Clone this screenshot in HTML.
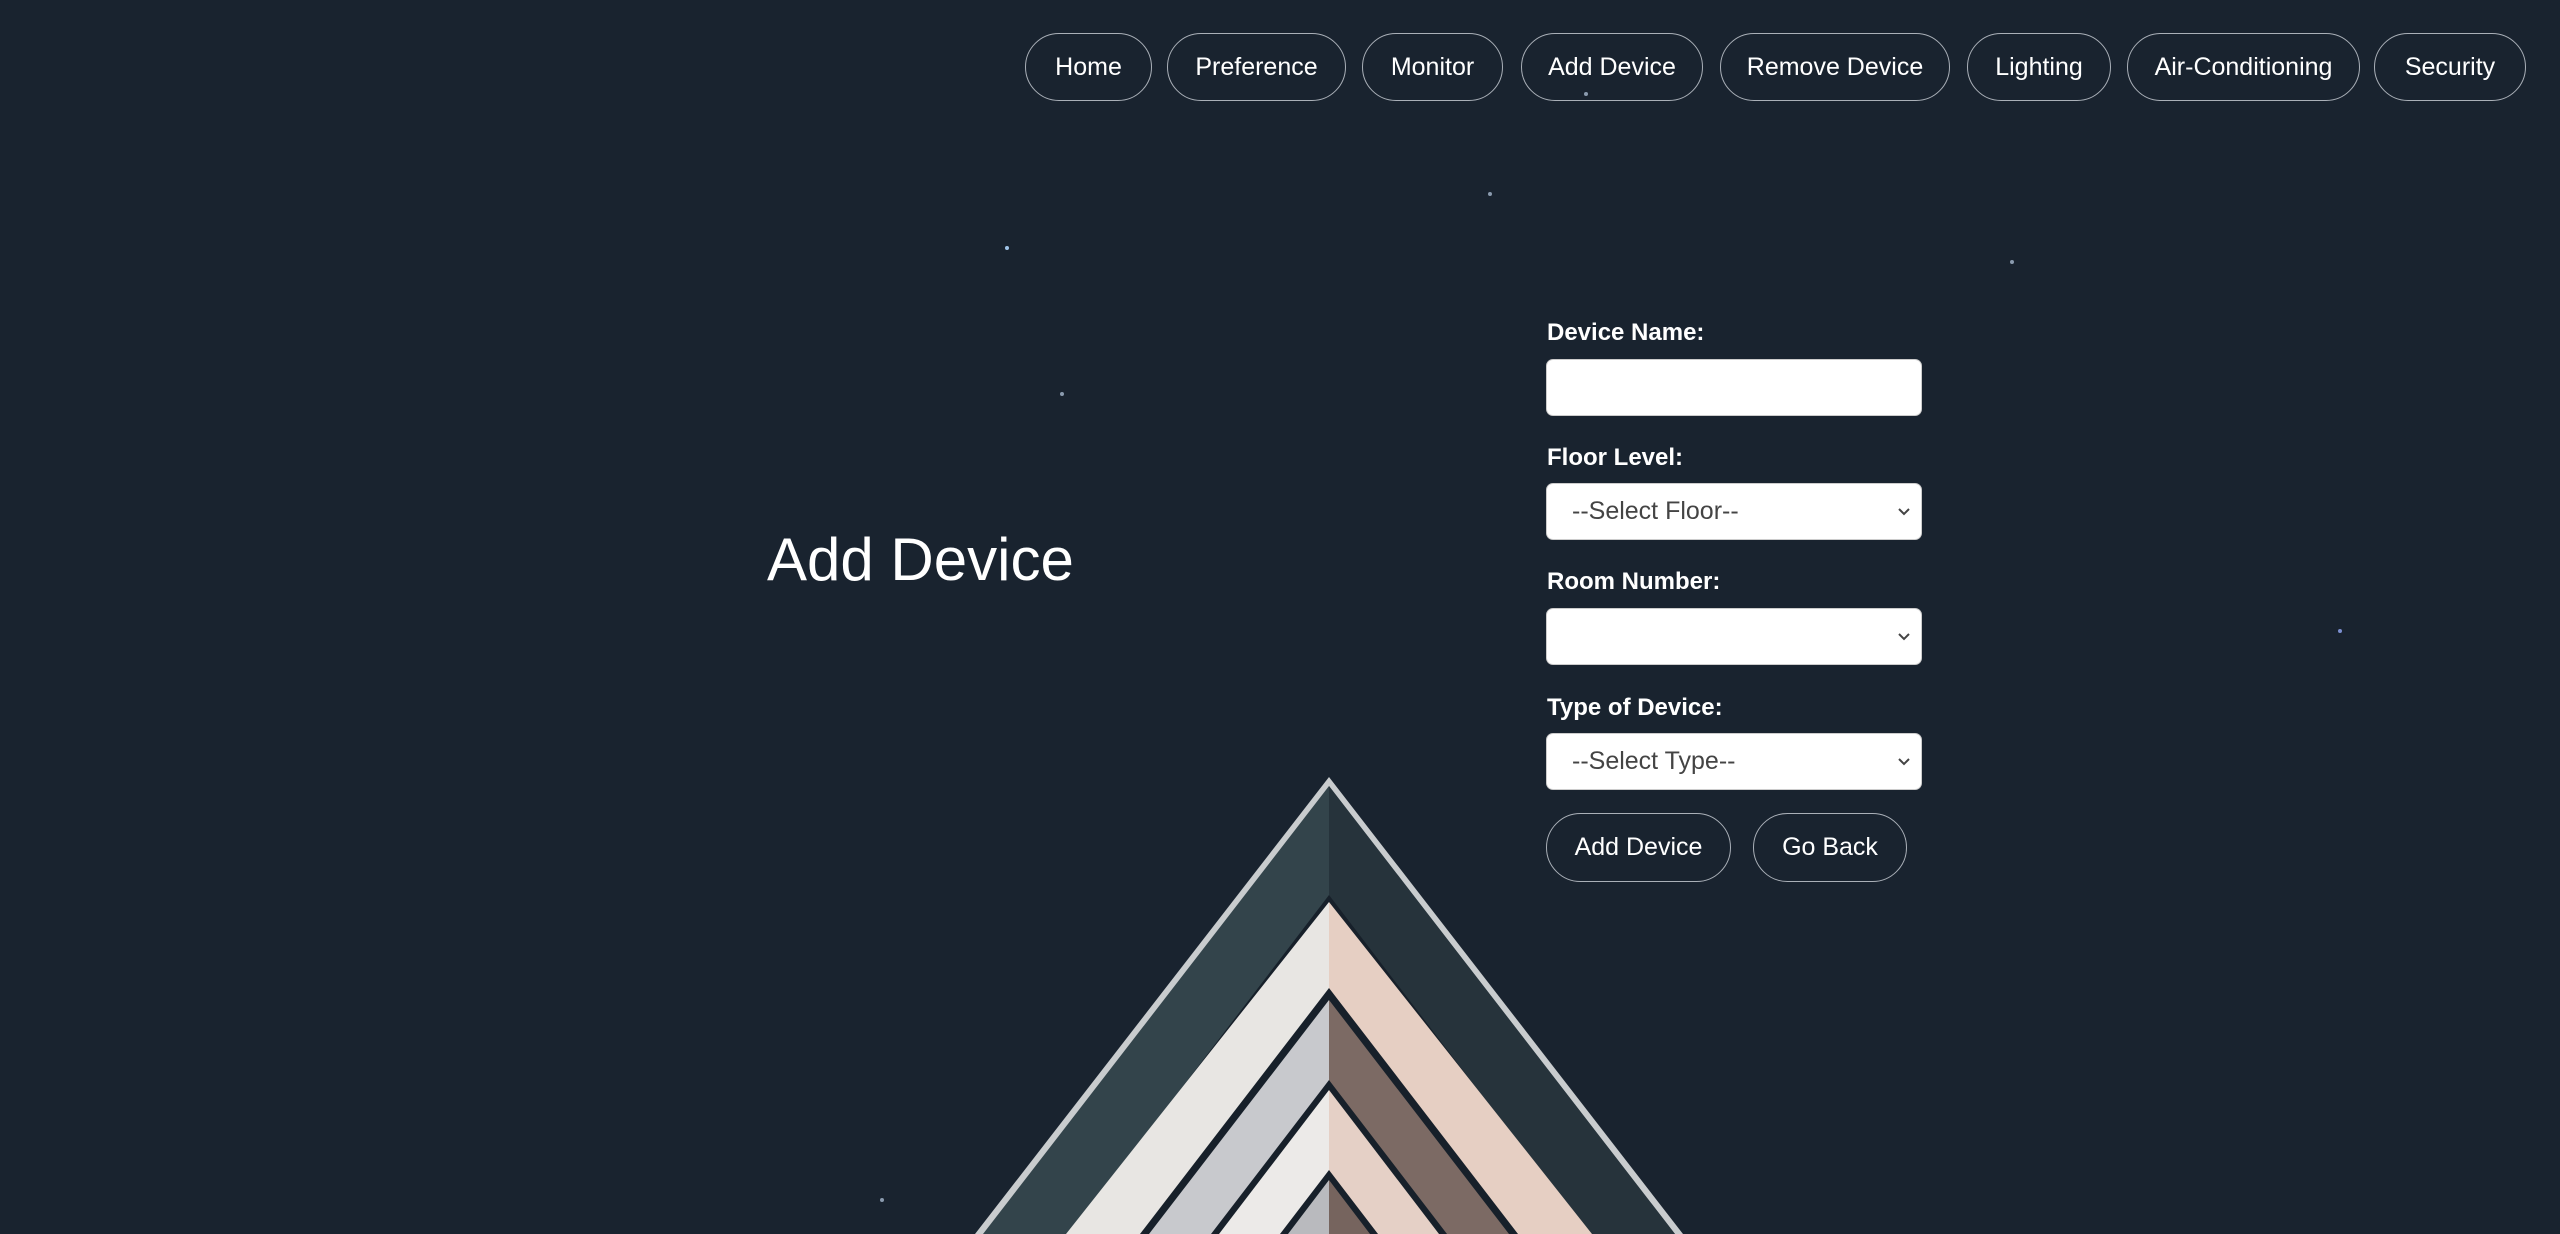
<!DOCTYPE html>
<html><head><meta charset="utf-8"><style>
html,body{margin:0;padding:0;width:2560px;height:1234px;overflow:hidden;}
body{background:#19232f;position:relative;font-family:"Liberation Sans",Arial,sans-serif;color:#fff;}
.nav{position:absolute;top:33px;height:68px;border:1.5px solid #aab0b8;border-radius:34px;box-sizing:border-box;display:flex;align-items:center;justify-content:center;font-size:25px;color:#fff;}
h1{position:absolute;left:767px;top:530px;margin:0;font-weight:normal;font-size:60px;line-height:1;}
.lbl{position:absolute;left:1547px;font-weight:bold;font-size:24px;line-height:1;}
.inp{position:absolute;left:1546px;width:376px;height:57px;background:#fff;border-radius:7px;border:1px solid #ccc;box-sizing:border-box;color:#444;font-size:25px;line-height:55px;padding-left:25px;}
.chev{position:absolute;right:10px;top:23px;}
.btn{position:absolute;top:813px;height:69px;border:1.5px solid #aab0b8;border-radius:35px;box-sizing:border-box;display:flex;align-items:center;justify-content:center;font-size:25px;}
.star{position:absolute;width:4px;height:4px;border-radius:50%;background:#8a9aae;}
</style></head><body>
<svg style="position:absolute;left:0;top:0" width="2560" height="1234">
<polygon points="1329,777 975,1234 1683,1234" fill="#c9ccce"/>
<polygon points="1329,786 983,1234 1675,1234" fill="#33444b"/>
<polygon points="1329,786 1329,1234 1675,1234" fill="#26333b"/>
<polygon points="1329,895 977,1356 1681,1356" fill="#17202a"/>
<polygon points="1329,902 1329,1234 1066,1234" fill="#e8e6e3"/>
<polygon points="1329,902 1329,1234 1592,1234" fill="#e6cfc3"/>
<polygon points="1329,988 1140,1234 1518,1234" fill="#17202a"/>
<polygon points="1329,1000 1329,1234 1149,1234" fill="#c8c9cd"/>
<polygon points="1329,1000 1329,1234 1509,1234" fill="#7c6a64"/>
<polygon points="1329,1080 1211,1234 1447,1234" fill="#17202a"/>
<polygon points="1329,1090 1329,1234 1219,1234" fill="#eceae8"/>
<polygon points="1329,1090 1329,1234 1439,1234" fill="#e5d0c6"/>
<polygon points="1329,1170 1280,1234 1378,1234" fill="#17202a"/>
<polygon points="1329,1180 1329,1234 1288,1234" fill="#b9babe"/>
<polygon points="1329,1180 1329,1234 1370,1234" fill="#76645e"/>
</svg>
<div class="star" style="left:1005px;top:246px;background:#9fc4e8"></div>
<div class="star" style="left:1584px;top:92px"></div>
<div class="star" style="left:1060px;top:392px"></div>
<div class="star" style="left:2338px;top:629px;background:#7c8fd0"></div>
<div class="star" style="left:1488px;top:192px"></div>
<div class="star" style="left:880px;top:1198px"></div>
<div class="star" style="left:2010px;top:260px"></div>
<div class="nav" style="left:1025px;width:127px">Home</div>
<div class="nav" style="left:1167px;width:179px">Preference</div>
<div class="nav" style="left:1362px;width:141px">Monitor</div>
<div class="nav" style="left:1521px;width:182px">Add Device</div>
<div class="nav" style="left:1720px;width:230px">Remove Device</div>
<div class="nav" style="left:1967px;width:144px">Lighting</div>
<div class="nav" style="left:2127px;width:233px">Air-Conditioning</div>
<div class="nav" style="left:2374px;width:152px">Security</div>
<h1>Add Device</h1>
<div class="lbl" style="top:321px">Device Name:</div>
<div class="inp" style="top:359px"></div>
<div class="lbl" style="top:446px">Floor Level:</div>
<div class="inp" style="top:483px">--Select Floor--<svg class="chev" width="14" height="10"><path d="M2 2 L7 7 L12 2" stroke="#444" stroke-width="2" fill="none"/></svg></div>
<div class="lbl" style="top:570px">Room Number:</div>
<div class="inp" style="top:608px"><svg class="chev" width="14" height="10"><path d="M2 2 L7 7 L12 2" stroke="#444" stroke-width="2" fill="none"/></svg></div>
<div class="lbl" style="top:696px">Type of Device:</div>
<div class="inp" style="top:733px">--Select Type--<svg class="chev" width="14" height="10"><path d="M2 2 L7 7 L12 2" stroke="#444" stroke-width="2" fill="none"/></svg></div>
<div class="btn" style="left:1546px;width:185px">Add Device</div>
<div class="btn" style="left:1753px;width:154px">Go Back</div>
</body></html>
